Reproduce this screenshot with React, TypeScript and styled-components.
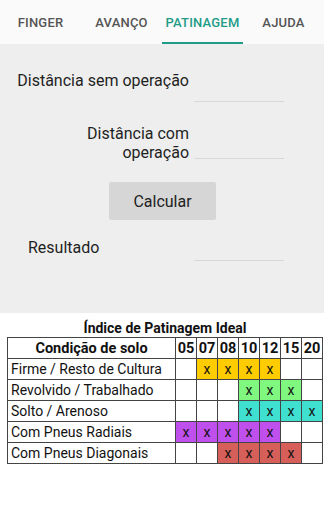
import React, { FC } from 'react';
import styled, { createGlobalStyle } from 'styled-components';

const GlobalStyle = createGlobalStyle`
    html, body {
        margin: 0;
        padding: 0;
        background: #ffffff;
        font-family: Roboto, 'Noto Sans', sans-serif;
    }
`;

const TABS = ['FINGER', 'AVANÇO', 'PATINAGEM', 'AJUDA'];
const ACTIVE_TAB = 2;
const COLUMNS = ['05', '07', '08', '10', '12', '15', '20'];

interface ISoilRow {
    name: string;
    color: string;
    marks: number[];
}

const ROWS: ISoilRow[] = [
    { name: 'Firme / Resto de Cultura', color: '#ffcc00', marks: [1, 2, 3, 4] },
    { name: 'Revolvido / Trabalhado', color: '#80f880', marks: [3, 4, 5] },
    { name: 'Solto / Arenoso', color: '#40e0d0', marks: [3, 4, 5, 6] },
    { name: 'Com Pneus Radiais', color: '#c050ee', marks: [0, 1, 2, 3, 4] },
    { name: 'Com Pneus Diagonais', color: '#d75f5a', marks: [2, 3, 4, 5] },
];

const App: FC = () => {
    return (
        <>
            <GlobalStyle />
            <Page>
                <TabBar>
                    {TABS.map((tab, i) => (
                        <Tab key={tab} active={i === ACTIVE_TAB}>
                            {tab}
                        </Tab>
                    ))}
                </TabBar>
                <Form>
                    <FieldRow>
                        <Label>Distância sem operação</Label>
                        <InputLine offset={12} />
                    </FieldRow>
                    <FieldRow gap={34}>
                        <Label>
                            Distância com
                            <br />
                            operação
                        </Label>
                        <InputLine offset={-3} />
                    </FieldRow>
                    <ButtonRow>
                        <CalcButton>Calcular</CalcButton>
                    </ButtonRow>
                    <ResultRow>
                        <ResultLabel>Resultado</ResultLabel>
                        <InputLine offset={4} />
                    </ResultRow>
                </Form>
                <TableSection>
                    <TableTitle>Índice de Patinagem Ideal</TableTitle>
                    <IndexTable>
                        <colgroup>
                            <NameCol />
                            {COLUMNS.map((c) => (
                                <NumCol key={c} />
                            ))}
                        </colgroup>
                        <thead>
                            <tr>
                                <HeadCell>Condição de solo</HeadCell>
                                {COLUMNS.map((c) => (
                                    <HeadCell key={c}>{c}</HeadCell>
                                ))}
                            </tr>
                        </thead>
                        <tbody>
                            {ROWS.map((row) => (
                                <tr key={row.name}>
                                    <NameCell>{row.name}</NameCell>
                                    {COLUMNS.map((c, i) => {
                                        const marked = row.marks.includes(i);
                                        return (
                                            <MarkCell key={c} fill={marked ? row.color : '#ffffff'}>
                                                {marked ? 'x' : ''}
                                            </MarkCell>
                                        );
                                    })}
                                </tr>
                            ))}
                        </tbody>
                    </IndexTable>
                </TableSection>
            </Page>
        </>
    );
};

export default App;

const Page = styled.div`
    width: 324px;
    height: 512px;
    display: flex;
    flex-direction: column;
    overflow: hidden;
`;

const TabBar = styled.div`
    height: 44px;
    background-color: #fafafa;
    display: grid;
    grid-template-columns: repeat(4, 1fr);
`;

const Tab = styled.div<{ active?: boolean }>`
    display: flex;
    align-items: center;
    justify-content: center;
    font-size: 13px;
    font-weight: 500;
    letter-spacing: 0.2px;
    color: ${(p) => (p.active ? '#1f9c87' : '#555555')};
    border-bottom: 2px solid ${(p) => (p.active ? '#1f9c87' : 'transparent')};
    box-sizing: border-box;
    padding-top: 2px;
`;

const Form = styled.div`
    height: 269px;
    background-color: #eeeeee;
    display: flex;
    flex-direction: column;
    padding-top: 27px;
    box-sizing: border-box;
`;

const FieldRow = styled.div<{ gap?: number }>`
    display: grid;
    grid-template-columns: 189px 90px;
    column-gap: 5px;
    align-items: end;
    margin-top: ${(p) => p.gap ?? 0}px;
`;

const Label = styled.div`
    font-size: 16px;
    line-height: 19px;
    color: #1f1f1f;
    text-align: right;
    white-space: nowrap;
`;

const InputLine = styled.div<{ offset: number }>`
    height: 1px;
    background-color: #d8d8d8;
    margin-bottom: ${(p) => -p.offset}px;
`;

const ButtonRow = styled.div`
    display: flex;
    padding-left: 109px;
    margin-top: 20px;
`;

const CalcButton = styled.button`
    width: 107px;
    height: 38px;
    border: none;
    border-radius: 2px;
    background-color: #d6d6d6;
    font-family: Roboto, sans-serif;
    font-size: 16px;
    color: #222222;
    padding: 0;
`;

const ResultRow = styled.div`
    display: grid;
    grid-template-columns: 166px 90px;
    padding-left: 28px;
    align-items: end;
    margin-top: 18px;
`;

const ResultLabel = styled.div`
    font-size: 16px;
    line-height: 19px;
    color: #1f1f1f;
`;

const TableSection = styled.div`
    display: flex;
    flex-direction: column;
    align-items: flex-start;
    padding-top: 7px;
    padding-left: 7px;
`;

const TableTitle = styled.div`
    align-self: stretch;
    text-align: center;
    font-size: 14px;
    font-weight: 700;
    color: #111111;
    line-height: 17px;
    padding-right: 1px;
`;

const IndexTable = styled.table`
    border-collapse: collapse;
    border: 1px solid #444444;
    font-size: 14px;
    color: #111111;
    table-layout: fixed;
    width: 315px;
`;

const NameCol = styled.col`
    width: 168px;
`;

const NumCol = styled.col`
    width: 21px;
`;

const HeadCell = styled.th`
    border: 1px solid #444444;
    height: 20px;
    padding: 0;
    font-weight: 700;
    font-size: 14.5px;
    text-align: center;
    white-space: nowrap;
`;

const NameCell = styled.td`
    border: 1px solid #444444;
    height: 20px;
    padding: 0 3px;
    white-space: nowrap;
    overflow: hidden;
    font-size: 14px;
`;

const MarkCell = styled.td<{ fill: string }>`
    border: 1px solid #444444;
    height: 20px;
    padding: 0;
    text-align: center;
    background-color: ${(p) => p.fill};
    font-size: 14px;
`;
